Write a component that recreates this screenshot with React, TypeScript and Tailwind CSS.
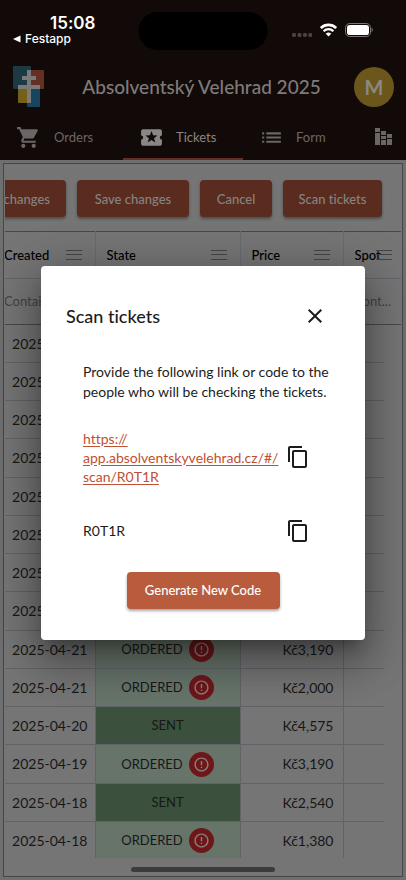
import React from "react";
import {
  MdClose,
  MdContentCopy,
  MdErrorOutline,
  MdList,
  MdLocalActivity,
  MdShoppingCart,
} from "react-icons/md";

type State = "ORDERED" | "SENT";

const orders: { created: string; state: State; price: string }[] = [
  { created: "2025-04-24", state: "ORDERED", price: "Kč3,190" },
  { created: "2025-04-24", state: "ORDERED", price: "Kč2,000" },
  { created: "2025-04-23", state: "SENT", price: "Kč3,190" },
  { created: "2025-04-23", state: "ORDERED", price: "Kč2,540" },
  { created: "2025-04-22", state: "ORDERED", price: "Kč3,190" },
  { created: "2025-04-22", state: "SENT", price: "Kč2,000" },
  { created: "2025-04-22", state: "ORDERED", price: "Kč3,190" },
  { created: "2025-04-22", state: "ORDERED", price: "Kč2,540" },
  { created: "2025-04-21", state: "ORDERED", price: "Kč3,190" },
  { created: "2025-04-21", state: "ORDERED", price: "Kč2,000" },
  { created: "2025-04-20", state: "SENT", price: "Kč4,575" },
  { created: "2025-04-19", state: "ORDERED", price: "Kč3,190" },
  { created: "2025-04-18", state: "SENT", price: "Kč2,540" },
  { created: "2025-04-18", state: "ORDERED", price: "Kč1,380" },
];

function StatusBar() {
  return (
    <div className="relative flex h-[59px] items-start justify-between pl-[13px] pr-[33px] font-['Inter',sans-serif] text-white">
      <div className="pt-[13px]">
        <div className="pl-[37px] text-[17px] font-semibold leading-5">15:08</div>
        <button className="flex items-center gap-1 text-xs font-medium leading-3">
          <svg width="8" height="8" viewBox="0 0 8 8" fill="currentColor" aria-hidden="true">
            <path d="M0 4 7.5 0.4v7.2z" />
          </svg>
          Festapp
        </button>
      </div>
      <div className="absolute left-1/2 top-3 h-[38px] w-[129px] -translate-x-1/2 rounded-full bg-black" />
      <div className="flex items-center gap-2 pt-[23px]">
        <svg width="20" height="14" viewBox="0 0 20 14" fill="#4a4341" aria-hidden="true">
          <rect x="0" y="10" width="4" height="4" rx="1.4" />
          <rect x="5.5" y="10" width="4" height="4" rx="1.4" />
          <rect x="11" y="10" width="4" height="4" rx="1.4" />
          <rect x="16.3" y="10" width="4" height="4" rx="1.4" />
        </svg>
        <svg width="17" height="14" viewBox="0 0 17 14" fill="none" stroke="#fff" aria-hidden="true">
          <path d="M0.8 5a11 11 0 0 1 15.4 0" strokeWidth="2.6" />
          <path d="M3.6 8.2a7 7 0 0 1 9.8 0" strokeWidth="2.3" />
          <path d="M8.5 13.6 5.7 10.8a4 4 0 0 1 5.6 0z" fill="#fff" stroke="none" />
        </svg>
        <svg width="28" height="14" viewBox="0 0 28 14" aria-hidden="true">
          <rect x="0.5" y="0.5" width="25" height="13" rx="4.2" fill="none" stroke="#7b7675" />
          <rect x="2" y="2" width="22" height="10" rx="2.8" fill="#fff" />
          <path d="M26.6 4.8c1.6.6 1.6 3.8 0 4.4z" fill="#7b7675" />
        </svg>
      </div>
    </div>
  );
}

function Logo() {
  return (
    <svg width="31" height="42" viewBox="0 0 31 42" aria-label="Velehrad">
      <rect x="0" y="0" width="18" height="23" rx="1" fill="#1b3a44" />
      <rect x="14" y="4" width="17" height="19" rx="1" fill="#643023" />
      <rect x="5" y="19" width="13" height="18" rx="1" fill="#756019" />
      <rect x="14" y="19" width="13" height="22" rx="1" fill="#16455f" />
      <path d="M14 4h4v6h5v4h-5v5h9v4h-9v14h-4v-14h-9v-4h9v-5h-5v-4h5z" fill="#7c7a79" />
    </svg>
  );
}

function ChartIcon() {
  return (
    <svg width="25" height="25" viewBox="0 0 25 25" fill="currentColor" aria-hidden="true">
      <path d="M5 3h5v4H5zM5 8h5v12H5zM11 6h5v4h-5zM11 11h5v3h-5zM11 15h5v5h-5zM17 9h5v4h-5zM17 14h5v6h-5z" />
    </svg>
  );
}

function Tabs() {
  return (
    <nav className="flex h-[45px] overflow-hidden text-[13px] text-[#6b6665]">
      <button className="flex w-[123px] shrink-0 items-center gap-[13px] pl-4">
        <MdShoppingCart size={25} />
        Orders
      </button>
      <button
        aria-current="page"
        className="flex w-[120px] shrink-0 items-center gap-3 border-b-2 border-[#642f22] pl-4 pt-0.5 text-[#8a8685]"
      >
        <MdLocalActivity size={25} />
        Tickets
      </button>
      <button className="flex w-[111px] shrink-0 items-center gap-3 pl-4">
        <MdList size={25} />
        Form
      </button>
      <button aria-label="Statistics" className="flex shrink-0 items-center pl-4">
        <ChartIcon />
      </button>
    </nav>
  );
}

function ToolButton({ children, className = "" }: { children: React.ReactNode; className?: string }) {
  return (
    <button
      className={`h-[37px] shrink-0 whitespace-nowrap rounded bg-[#592c1f] pt-0.5 text-[13px] font-medium text-[#868382] shadow-[0_2px_3px_rgba(0,0,0,0.35)] ${className}`}
    >
      {children}
    </button>
  );
}

function MenuLines({ className = "" }: { className?: string }) {
  return (
    <svg width="16" height="10" viewBox="0 0 16 10" stroke="#454545" className={className} aria-hidden="true">
      <path d="M0 .5h16M0 4.5h16M0 9.5h16" />
    </svg>
  );
}

function HeaderCell({ label, className }: { label: string; className: string }) {
  return (
    <div className={`flex items-center justify-between ${className}`}>
      {label}
      <MenuLines />
    </div>
  );
}

function OrdersTable() {
  return (
    <table className="w-full table-fixed border-collapse text-sm text-[#171717]">
      <colgroup>
        <col className="w-[90px]" />
        <col className="w-[145px]" />
        <col className="w-[103px]" />
        <col className="w-[41px]" />
        <col />
      </colgroup>
      <thead className="text-[13px] text-black">
        <tr className="h-[47px] border-y border-b-[#5f656c] border-t-[#484848]">
          <th className="border-r border-[#666b70] p-0 text-left font-medium">
            <HeaderCell label="Created" className="-ml-px pr-[13px]" />
          </th>
          <th className="border-r border-[#666b70] p-0 text-left font-medium">
            <HeaderCell label="State" className="pl-[11px] pr-[13px]" />
          </th>
          <th className="border-r border-[#666b70] p-0 text-left font-medium">
            <HeaderCell label="Price" className="pl-[11px] pr-[13px]" />
          </th>
          <th colSpan={2} className="p-0 text-left font-medium">
            <div className="relative flex items-center pl-[11px]">
              Spot
              <MenuLines className="absolute right-[9px]" />
            </div>
          </th>
        </tr>
        <tr className="h-[46px] border-b border-[#484848]">
          <td className="p-0">
            <input aria-label="Filter created" placeholder="Contains..." className="-ml-px block w-20 bg-transparent placeholder:text-[#434343]" />
          </td>
          <td className="p-0 pl-[11px]">
            <input aria-label="Filter state" placeholder="Contains..." className="block w-full bg-transparent placeholder:text-[#434343]" />
          </td>
          <td className="p-0 pl-[11px]">
            <input aria-label="Filter price" placeholder="Contains..." className="block w-full bg-transparent placeholder:text-[#434343]" />
          </td>
          <td colSpan={2} className="p-0 pl-[11px] pr-2">
            <input aria-label="Filter spot" placeholder="Cont..." className="block w-full bg-transparent placeholder:text-[#434343]" />
          </td>
        </tr>
      </thead>
      <tbody>
        {orders.map((o, i) => (
          <tr key={i} className={i % 4 === 3 ? "h-[39px]" : "h-[38px]"}>
            <td className="border-b border-r border-[#5f6368] p-0 text-center">{o.created}</td>
            <td
              className={`border-b border-r border-[#5f6368] p-0 text-[13px] ${
                o.state === "SENT" ? "bg-[#3b513d]" : "bg-[#67746a]"
              }`}
            >
              <div className="flex items-center justify-center gap-1.5">
                {o.state}
                {o.state === "ORDERED" && (
                  <span className="flex size-[25px] items-center justify-center rounded-full bg-[#6d1719] text-[#8c8080]">
                    <MdErrorOutline size={17} />
                  </span>
                )}
              </div>
            </td>
            <td className="border-b border-r border-[#5f6368] p-0 pr-[9px] text-right">{o.price}</td>
            <td className="border-b border-[#5f6368] p-0" />
            <td className="p-0" />
          </tr>
        ))}
      </tbody>
    </table>
  );
}

function ScanDialog() {
  return (
    <div className="absolute inset-0 flex items-center px-[41px] pb-[34px] pt-[59px]">
      <div
        role="dialog"
        aria-labelledby="scan-title"
        className="w-full rounded bg-white pb-[31px] pt-[38px] text-[#1c1c1c] shadow-[0_11px_15px_-7px_rgba(0,0,0,0.3),0_24px_38px_3px_rgba(0,0,0,0.22),0_9px_46px_8px_rgba(0,0,0,0.2)]"
      >
        <div className="flex h-6 items-center justify-between pl-[25px] pr-[38px]">
          <h2 id="scan-title" className="text-lg font-medium">
            Scan tickets
          </h2>
          <button aria-label="Close">
            <MdClose size={24} />
          </button>
        </div>
        <p className="mt-[34px] whitespace-nowrap pl-[42px] text-sm leading-5">
          Provide the following link or code to the
          <br />
          people who will be checking the tickets.
        </p>
        <div className="mt-[27px] flex items-center justify-between pl-[42px] pr-[55px]">
          <a href="#scan" className="text-sm leading-[19px] text-[#bf5033] underline underline-offset-2">
            https://
            <br />
            app.absolventskyvelehrad.cz/#/
            <br />
            scan/R0T1R
          </a>
          <button aria-label="Copy link">
            <MdContentCopy size={24} />
          </button>
        </div>
        <div className="mt-[33px] flex h-6 items-center justify-between pl-[42px] pr-[55px]">
          <span className="text-sm">R0T1R</span>
          <button aria-label="Copy code">
            <MdContentCopy size={24} />
          </button>
        </div>
        <button className="mx-auto mt-[29px] block h-[37px] w-[153px] rounded bg-[#b95c3e] pt-0.5 text-[13px] font-medium text-white shadow-[0_2px_3px_rgba(0,0,0,0.35)]">
          Generate New Code
        </button>
      </div>
    </div>
  );
}

export default function App() {
  return (
    <div className="relative min-h-screen overflow-hidden bg-[#6f6f6f] font-['Lato',sans-serif] [font-variant-ligatures:none]">
      <header className="bg-[#120a08]">
        <StatusBar />
        <div className="grid h-14 grid-cols-[40px_1fr_40px] items-center pl-[13px] pr-3">
          <Logo />
          <h1 className="pr-1 text-center text-[19px] font-medium text-[#7f7b7a]">Absolventský Velehrad 2025</h1>
          <button
            aria-label="Account"
            className="size-10 rounded-full bg-[#6b571c] text-xl font-bold text-[#8b8781]"
          >
            M
          </button>
        </div>
        <Tabs />
      </header>
      <main className="mx-[3px] mb-[3px] mt-[3px] border border-[#464646] bg-[#757575] px-px">
        <div className="flex h-[67px] items-center justify-end gap-[11px] overflow-hidden pr-[19px] pt-0.5">
          <ToolButton className="px-4">Discard changes</ToolButton>
          <ToolButton className="w-[112px]">Save changes</ToolButton>
          <ToolButton className="w-[72px]">Cancel</ToolButton>
          <ToolButton className="w-[99px]">Scan tickets</ToolButton>
        </div>
        <div className="h-[627px] overflow-hidden">
          <OrdersTable />
        </div>
        <div className="flex h-[18px] items-center justify-center pt-1">
          <div className="h-[5px] w-36 rounded-full bg-[#3c3c3c]" />
        </div>
      </main>
      <ScanDialog />
    </div>
  );
}
